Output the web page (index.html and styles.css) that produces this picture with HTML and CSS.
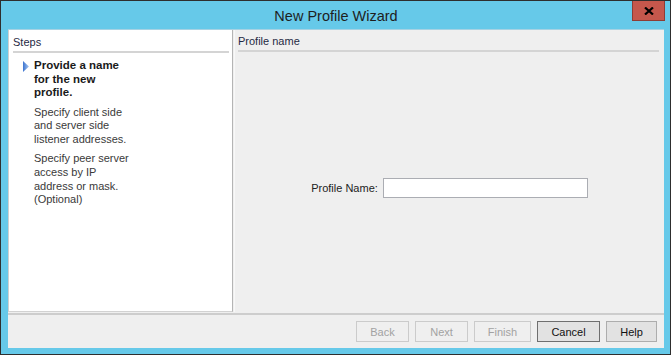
FILE: index.html
```html
<!DOCTYPE html>
<html lang="en">
<head>
  <meta charset="UTF-8" />
  <title>New Profile Wizard</title>
  <link rel="stylesheet" href="styles.css">
</head>
<body>

  <div class="window">
    <div class="titlebar">
      <span class="title">New Profile Wizard</span>
      <button class="close" title="Close">
        <svg width="10" height="8" viewBox="0 0 10 8"><path d="M1 0.5 L9 7.5 M9 0.5 L1 7.5" stroke="#000" stroke-width="2.2" fill="none"/></svg>
      </button>
    </div>

    <div class="client">
      <div class="main">
        <div class="steps">
          <div class="panel-head">Steps</div>
          <ul class="step-list">
            <li class="step current">
              <span class="marker">
                <svg width="6" height="11" viewBox="0 0 6 11">
                  <defs>
                    <linearGradient id="arrowFill" x1="0" y1="0" x2="1" y2="0">
                      <stop offset="0" stop-color="#3d74cf"/>
                      <stop offset="1" stop-color="#a9c8f2"/>
                    </linearGradient>
                  </defs>
                  <path d="M0 0 L6 5.5 L0 11 Z" fill="url(#arrowFill)"/>
                </svg>
              </span>
              <span>Provide a name<br>for the new<br>profile.</span>
            </li>
            <li class="step">
              <span class="marker"></span>
              <span>Specify client side<br>and server side<br>listener addresses.</span>
            </li>
            <li class="step">
              <span class="marker"></span>
              <span>Specify peer server<br>access by IP<br>address or mask.<br>(Optional)</span>
            </li>
          </ul>
        </div>

        <div class="page">
          <div class="panel-head page-head">Profile name</div>
          <div class="page-body">
            <label class="field-label" for="profileName">Profile Name:</label>
            <input type="text" id="profileName" class="field-input" />
          </div>
        </div>
      </div>

      <div class="footer">
        <button class="btn btn-back" disabled>Back</button>
        <button class="btn btn-next" disabled>Next</button>
        <button class="btn btn-finish" disabled>Finish</button>
        <button class="btn btn-cancel">Cancel</button>
        <button class="btn btn-help">Help</button>
      </div>
    </div>
  </div>

</body>
</html>
```

FILE: styles.css
```css
* {
  box-sizing: border-box;
}
body {
  margin: 0;
  font-family: 'Liberation Sans', Arial, sans-serif;
  font-size: 11px;
  color: #222;
}
.window {
  width: 671px;
  height: 355px;
  border: 1px solid #2e2e2e;
  background: #66c9e9;
  padding: 0 6px 6px 7px;
  display: flex;
  flex-direction: column;
}
.titlebar {
  position: relative;
  height: 28px;
  flex-shrink: 0;
  text-align: center;
}
.title {
  display: inline-block;
  padding-top: 6px;
  font-size: 14.5px;
  line-height: 18px;
  color: #1e1e1e;
}
.close {
  position: absolute;
  top: 0;
  right: -1px;
  width: 33px;
  height: 20px;
  padding: 0;
  border: 1px solid #8e3c35;
  border-top: none;
  background: #c5574c;
  display: flex;
  align-items: center;
  justify-content: center;
}
.client {
  flex: 1;
  background: #efefef;
  border-top: 1px solid #a6d2e3;
  display: flex;
  flex-direction: column;
}
.main {
  display: flex;
  height: 282px;
}
.steps {
  width: 225px;
  background: #fff;
  border: 1px solid #b4b4b4;
  border-top: none;
  border-left-color: #cfcfcf;
  border-bottom-color: #d2d2d2;
}
.panel-head {
  margin: 0 3px 0 4px;
  padding: 5px 0 1px;
  line-height: 15px;
  color: #1f2a44;
  border-bottom: 2px solid #d4d4d4;
}
.step-list {
  list-style: none;
  margin: 6px 0 0;
  padding: 0 0 0 13px;
}
.step {
  display: flex;
  line-height: 13.7px;
  color: #3a3a3a;
  margin-bottom: 5.5px;
}
.step.current {
  font-weight: bold;
  font-size: 11.5px;
  color: #1a1a1a;
}
.marker {
  width: 12px;
  flex-shrink: 0;
  padding: 2px 0 0 1px;
}
.page {
  flex: 1;
  margin-left: 1px;
  border-left: 1px solid #f8f8f8;
  display: flex;
  flex-direction: column;
}
.page-head {
  margin: 0 5px 0 3px;
  padding-top: 4px;
}
.page-body {
  flex: 1;
  display: flex;
  align-items: center;
  justify-content: center;
  gap: 5px;
  padding-top: 12px;
}
.field-label {
  color: #222;
}
.field-input {
  width: 205px;
  height: 20px;
  margin: 0;
  border: 1px solid #abadb3;
  background: #fff;
  font-family: inherit;
  font-size: 11px;
}
.footer {
  flex: 1;
  border-top: 2px solid #cdcdcd;
  margin-top: 1px;
  display: flex;
  justify-content: flex-end;
  align-items: flex-start;
  gap: 6px;
  padding: 6px 7px 0 0;
}
.btn {
  height: 21px;
  padding: 0;
  font-family: inherit;
  font-size: 11px;
  color: #111;
  background: #e2e2e2;
  border: 1px solid #adadad;
}
.btn:disabled {
  color: #a2a2a2;
  background: #efefef;
  border-color: #cbcbcb;
}
.btn-back,
.btn-next {
  width: 53px;
}
.btn-finish {
  width: 57px;
}
.btn-cancel {
  width: 63px;
  border-color: #6f6f6f;
}
.btn-help {
  width: 51px;
}
```
